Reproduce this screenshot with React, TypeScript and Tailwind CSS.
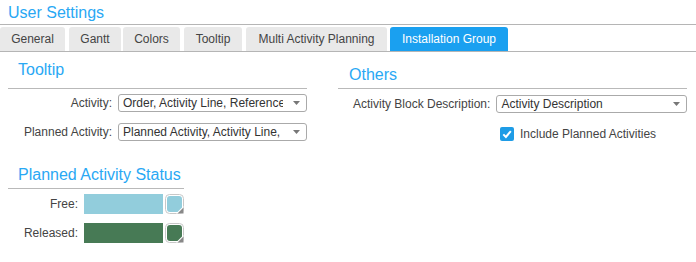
import React from "react";

const tabs = [
  { t: "General", c: "w-[65px] bg-[#e9e9e9] text-[#444444]" },
  { t: "Gantt", c: "ml-[4px] w-[52px] bg-[#e9e9e9] text-[#444444]" },
  { t: "Colors", c: "ml-[2px] w-[57px] bg-[#e9e9e9] text-[#444444]" },
  { t: "Tooltip", c: "ml-[4px] w-[58px] bg-[#e9e9e9] text-[#444444]" },
  { t: "Multi Activity Planning", c: "ml-[4px] w-[141px] bg-[#e9e9e9] text-[#444444]" },
  { t: "Installation Group", c: "ml-[3px] w-[118px] bg-[#1aa0f0] text-white" },
];

function Select({ text, width }: { text: string; width: string }) {
  return (
    <div className={`flex items-center h-[18px] border border-[#aaaaaa] rounded-[3px] bg-white ${width}`}>
      <div className="flex-1 min-w-0 overflow-hidden whitespace-nowrap pl-[4px] text-[12px] leading-[16px] text-[#333333]">
        {text}
      </div>
      <svg width="7" height="4" viewBox="0 0 7 4" className="ml-[10px] mr-[6px] shrink-0">
        <polygon points="0,0 7,0 3.5,4" fill="#777777" />
      </svg>
    </div>
  );
}

function Picker({ color }: { color: string }) {
  return (
    <svg width="19" height="20" viewBox="0 0 19 20" className="shrink-0">
      <rect x="0.5" y="0.5" width="18" height="19" rx="4" fill="#ffffff" stroke="#c8c8c8" />
      <rect x="2" y="2" width="15" height="16" rx="3" fill={color} />
      <polygon points="18.5,12 18.5,19.5 11,19.5" fill="#ffffff" />
      <polygon points="18.5,13.5 18.5,19.5 12.5,19.5" fill="#888888" />
    </svg>
  );
}

export default function App() {
  return (
    <div className="w-[696px] h-[262px] bg-white overflow-hidden font-['Liberation_Sans',Arial,sans-serif]">
      <div className="h-[25px] border-b border-[#b5b5b5] pl-[8px] pt-[2px] text-[16px] leading-[22px] text-[#29a8f4]">
        User Settings
      </div>
      <div className="flex pt-[2px] border-b border-[#b5b5b5]">
        {tabs.map((x) => (
          <div
            key={x.t}
            className={`h-[24px] rounded-t-[3px] text-center whitespace-nowrap text-[12px] leading-[24px] ${x.c}`}
          >
            {x.t}
          </div>
        ))}
      </div>
      <div className="flex pl-[8px]">
        <div className="w-[299px] flex flex-col">
          <div className="mt-[8px] pl-[10px] pb-[8px] text-[16px] leading-[20px] text-[#29a8f4] border-b border-[#b9b9b9]">
            Tooltip
          </div>
          <div className="mt-[5px] flex items-center h-[18px] gap-[6px]">
            <div className="w-[104px] text-right text-[12px] text-[#444444]">Activity:</div>
            <Select text="Order, Activity Line, Reference" width="w-[189px]" />
          </div>
          <div className="mt-[11px] flex items-center h-[18px] gap-[6px]">
            <div className="w-[104px] text-right text-[12px] text-[#444444]">Planned Activity:</div>
            <Select text="Planned Activity, Activity Line, Reference" width="w-[189px]" />
          </div>
          <div className="w-[176px] mt-[24px] pl-[10px] pb-[3px] text-[16px] leading-[20px] text-[#29a8f4] border-b border-[#b9b9b9]">
            Planned Activity Status
          </div>
          <div className="mt-[5px] flex items-center h-[20px]">
            <div className="w-[70px] text-right text-[12px] text-[#444444]">Free:</div>
            <div className="ml-[6px] w-[79px] h-[20px] bg-[#92cddc]" />
            <div className="ml-[2px] flex">
              <Picker color="#92cddc" />
            </div>
          </div>
          <div className="mt-[9px] flex items-center h-[20px]">
            <div className="w-[70px] text-right text-[12px] text-[#444444]">Released:</div>
            <div className="ml-[6px] w-[79px] h-[20px] bg-[#477a55]" />
            <div className="ml-[2px] flex">
              <Picker color="#477a55" />
            </div>
          </div>
        </div>
        <div className="ml-[31px] w-[349px] flex flex-col">
          <div className="mt-[13px] pl-[11px] pb-[3px] text-[16px] leading-[20px] text-[#29a8f4] border-b border-[#b9b9b9]">
            Others
          </div>
          <div className="mt-[6px] flex items-center h-[18px] pl-[15px] gap-[6px]">
            <div className="text-[12px] text-[#444444] whitespace-nowrap">Activity Block Description:</div>
            <Select text="Activity Description" width="flex-1" />
          </div>
          <div className="mt-[14px] flex items-center h-[14px] pl-[162px] gap-[6px]">
            <svg width="14" height="14" viewBox="0 0 14 14" className="shrink-0">
              <rect x="0" y="0" width="14" height="14" rx="2" fill="#1e9ce6" />
              <path d="M3.3 7.4 L5.9 10 L10.8 4.2" fill="none" stroke="#ffffff" strokeWidth="2" />
            </svg>
            <div className="text-[12px] text-[#444444] whitespace-nowrap">Include Planned Activities</div>
          </div>
        </div>
      </div>
    </div>
  );
}
